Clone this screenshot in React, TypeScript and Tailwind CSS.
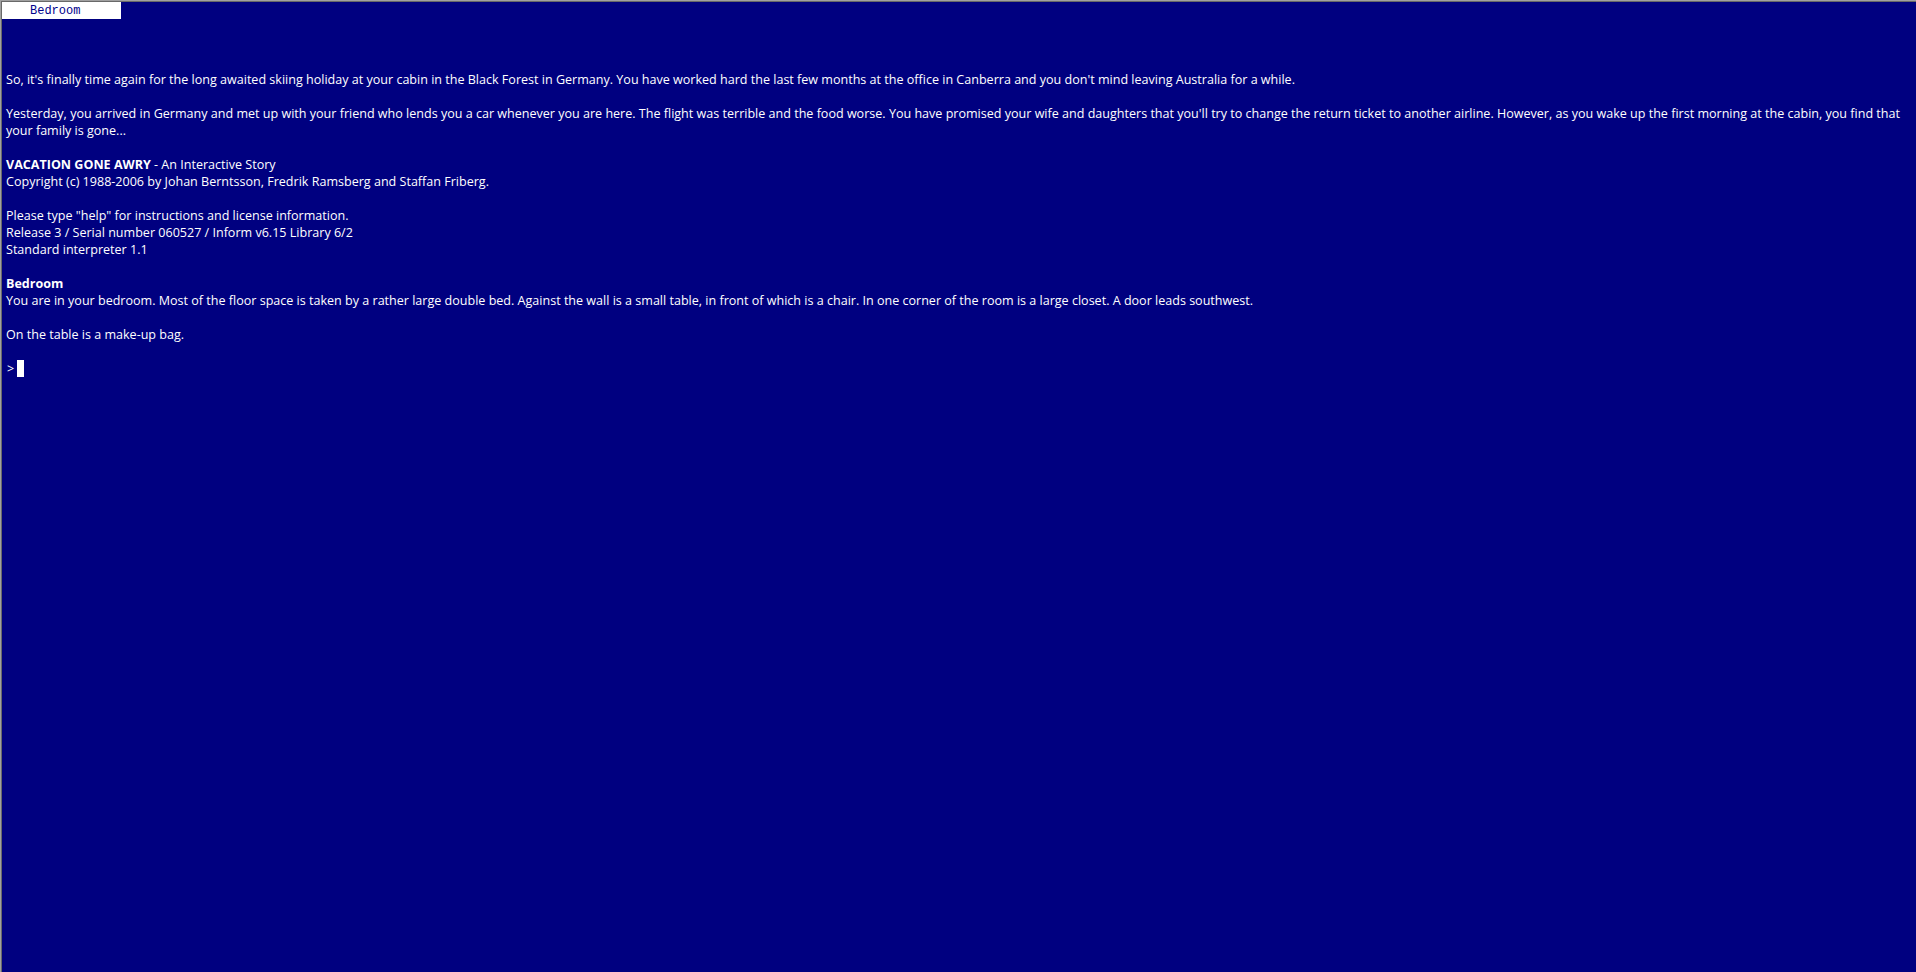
const FONT = "font-['Open_Sans','Noto_Sans',sans-serif]"

type Line = { text?: string; bold?: string; rest?: string }

const LINES: Line[] = [
  { text: "So, it's finally time again for the long awaited skiing holiday at your cabin in the Black Forest in Germany. You have worked hard the last few months at the office in Canberra and you don't mind leaving Australia for a while." },
  {},
  { text: "Yesterday, you arrived in Germany and met up with your friend who lends you a car whenever you are here. The flight was terrible and the food worse. You have promised your wife and daughters that you'll try to change the return ticket to another airline. However, as you wake up the first morning at the cabin, you find that" },
  { text: 'your family is gone...' },
  {},
  { bold: 'VACATION GONE AWRY', rest: ' - An Interactive Story' },
  { text: 'Copyright (c) 1988-2006 by Johan Berntsson, Fredrik Ramsberg and Staffan Friberg.' },
  {},
  { text: 'Please type "help" for instructions and license information.' },
  { text: 'Release 3 / Serial number 060527 / Inform v6.15 Library 6/2' },
  { text: 'Standard interpreter 1.1' },
  {},
  { bold: 'Bedroom' },
  { text: 'You are in your bedroom. Most of the floor space is taken by a rather large double bed. Against the wall is a small table, in front of which is a chair. In one corner of the room is a large closet. A door leads southwest.' },
  {},
  { text: 'On the table is a make-up bag.' },
  {},
]

export default function App() {
  return (
    <div className="w-[1916px] h-[972px] overflow-hidden border-t border-l border-[#a0a0a0] bg-[#000080]">
      <div className="h-full border-t border-l border-[#696969] flex flex-col">
        {/* status line */}
        <div className="h-[17px] w-[119px] bg-white pl-[28px] flex items-center font-['Liberation_Mono',monospace] text-[12px] text-[#00008b] leading-none">
          Bedroom
        </div>

        <div className={`${FONT} text-[12.55px] leading-[17px] text-white pt-[52px] pl-[4px]`}>
          {LINES.map((l, i) => (
            <div key={i} className="h-[17px] whitespace-nowrap">
              {l.bold && <span className="font-bold">{l.bold}</span>}
              {l.rest}
              {l.text}
            </div>
          ))}
          <div className="h-[17px] flex items-center">
            <span className="ml-px">&gt;</span>
            <span className="ml-[3px] w-[7px] h-[17px] bg-white" />
          </div>
        </div>
      </div>
    </div>
  )
}
